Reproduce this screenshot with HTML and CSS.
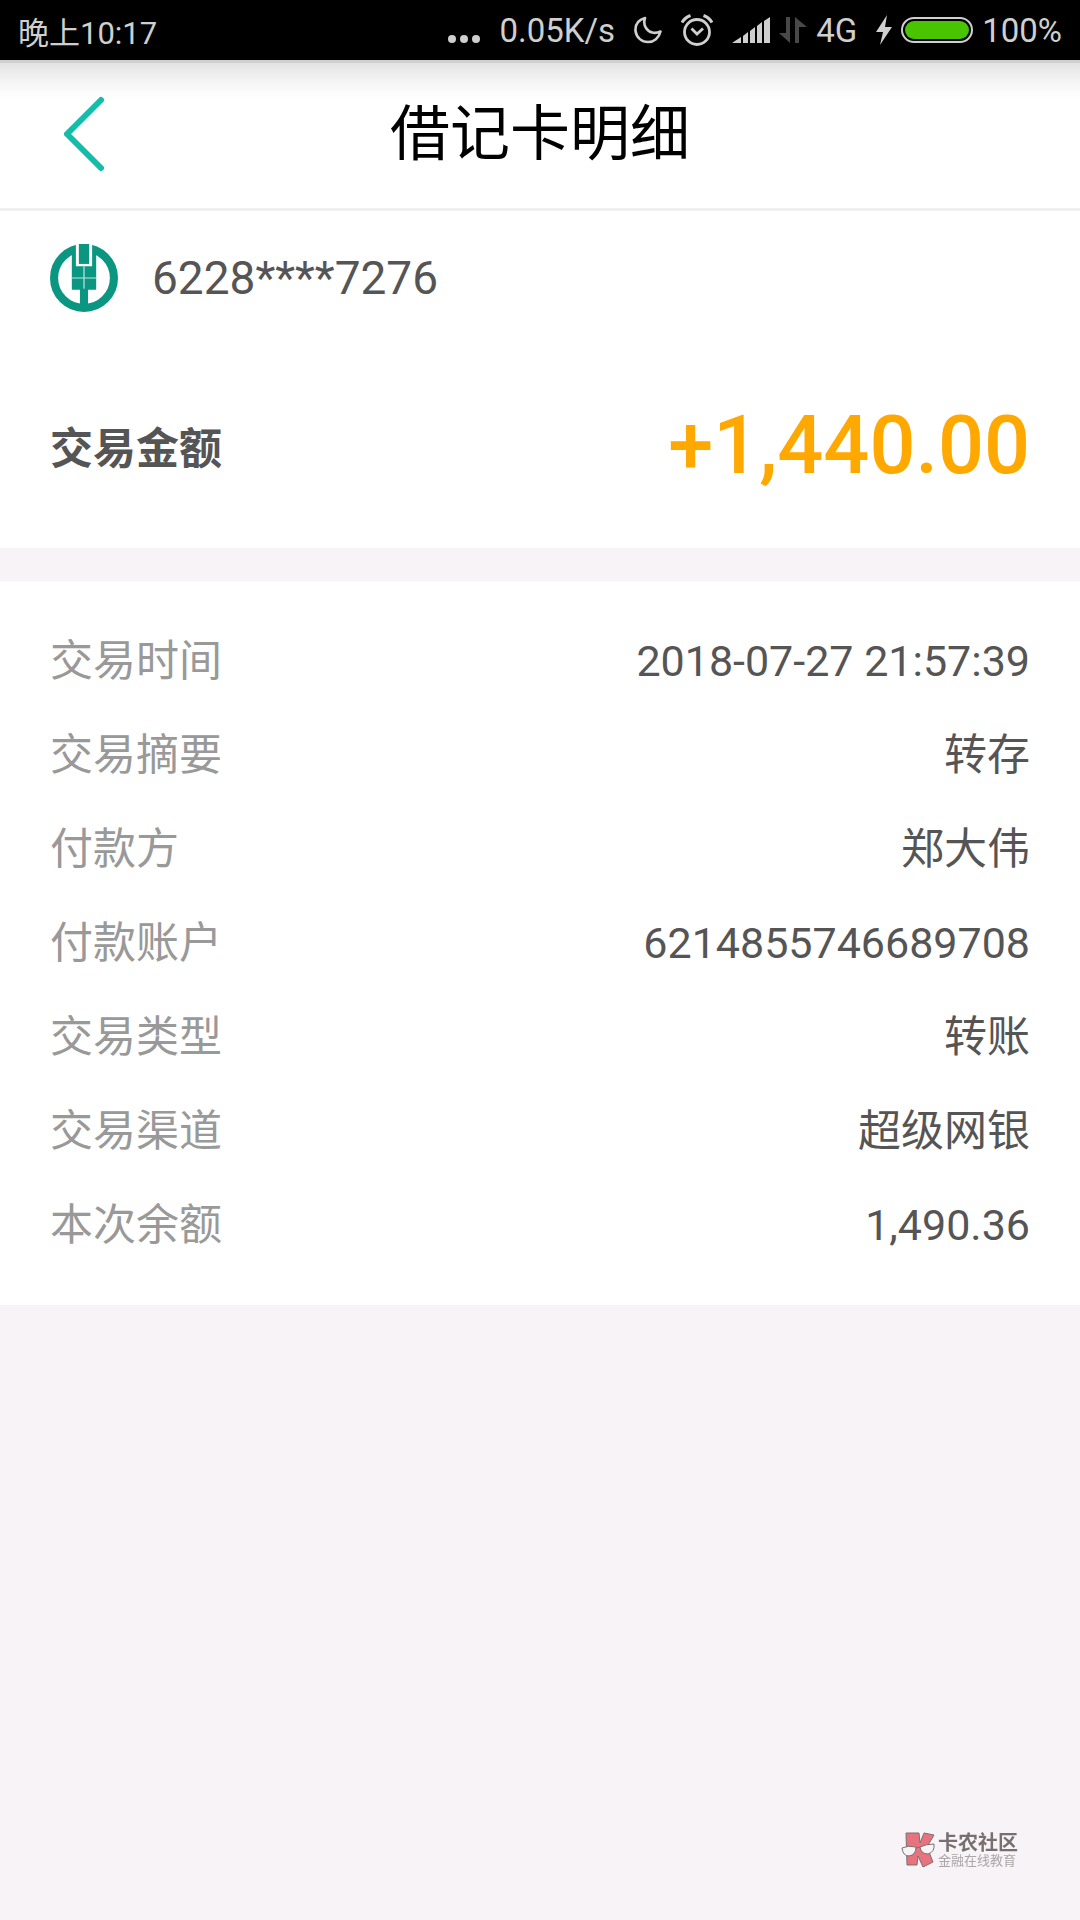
FILE: index.html
```html
<!DOCTYPE html>
<html lang="zh-CN">
  <head>
    <meta charset="UTF-8" />
    <meta name="viewport" content="width=device-width, initial-scale=1.0" />
    <title>借记卡明细</title>
    <link rel="stylesheet" href="styles.css" />
  </head>
  <body>
    <div class="status-bar">
      <span class="status-time">晚上10:17</span>
      <div class="status-icons">
        <svg width="32" height="30" viewBox="0 0 32 30" fill="#cfcfcf">
          <circle cx="4" cy="24" r="4" />
          <circle cx="16" cy="24" r="4" />
          <circle cx="28" cy="24" r="4" />
        </svg>
        <span>0.05K/s</span>
        <!-- moon -->
        <svg width="28" height="28" viewBox="0 0 28 28">
          <path d="M11 2 C4 4 1 9 1.500 15 C2.500 22 8 26 14 26 C20 26 25 22 26.500 15.500 C21 18 15 17 12 12 C10 9 10 5 11 2 Z" fill="none" stroke="#cfcfcf" stroke-width="2.6" stroke-linejoin="round" />
        </svg>
        <!-- alarm -->
        <svg width="32" height="32" viewBox="0 0 32 32" fill="none" stroke="#cfcfcf">
          <circle cx="16" cy="18" r="12.5" stroke-width="2.8" />
          <path d="M10.5 14.5 L16 20 L22 14.5" stroke-width="2.8" />
          <path d="M1 8.5 Q4 3.5 9.5 1.5 M31 8.5 Q28 3.5 22.5 1.5" stroke-width="3" />
        </svg>
        <div class="status-group">
          <svg width="38" height="28" viewBox="0 0 38 28" fill="#cfcfcf">
            <path d="M0 27 L9 21 V27 Z M11 20 L16 16 V27 H11 Z M18 15 L23 11 V27 H18 Z M25 10 L30 6 V27 H25 Z M32 5 L38 1 V27 H32 Z" />
          </svg>
          <svg width="28" height="28" viewBox="0 0 28 28" fill="#484848">
            <path d="M7 1 H11 V27 L0 17 H7 Z" />
            <path d="M16 27 V1 L28 11 H20 V27 Z" />
          </svg>
          <span>4G</span>
        </div>
        <div class="status-group">
          <svg width="16" height="30" viewBox="0 0 16 30" fill="#cfcfcf">
            <path d="M11 0 L0 17 H7 L4 30 L16 12 H9 Z" />
          </svg>
          <div class="battery"></div>
          <span>100%</span>
        </div>
      </div>
    </div>

    <header class="header">
      <button class="back-btn" aria-label="返回">
        <svg width="40" height="76" viewBox="0 0 40 76">
          <path d="M37 4 L3 38 L37 72" fill="none" stroke="#13bda9" stroke-width="6" stroke-linecap="round" stroke-linejoin="round" />
        </svg>
      </button>
      <h1 class="title">借记卡明细</h1>
    </header>

    <main>
      <section class="card">
        <div class="account">
          <svg width="68" height="68" viewBox="0 0 67 67">
            <circle cx="33.5" cy="33.5" r="29.5" fill="none" stroke="#0b9681" stroke-width="8" />
            <path d="M21.5 3 H45.5 V45 H37.5 V62 H29.5 V45 H21.5 Z" fill="#0b9681" />
            <path d="M25.5 0 H28.5 V19.5 H38.5 V0 H41.5 V22 H25.5 Z" fill="#fff" />
            <path d="M28.5 0 H38.5 V19.5 H28.5 Z" fill="#0b9681" />
            <path d="M33.5 22 V44 M21 33.5 H46" stroke="#bfe5df" stroke-width="1.2" />
          </svg>
          <span class="account-number">6228****7276</span>
        </div>
        <div class="amount-row">
          <span class="amount-label">交易金额</span>
          <span class="amount">+1,440.00</span>
        </div>
      </section>

      <dl class="details">
        <div class="detail-row">
          <dt>交易时间</dt>
          <dd>2018-07-27 21:57:39</dd>
        </div>
        <div class="detail-row">
          <dt>交易摘要</dt>
          <dd>转存</dd>
        </div>
        <div class="detail-row">
          <dt>付款方</dt>
          <dd>郑大伟</dd>
        </div>
        <div class="detail-row">
          <dt>付款账户</dt>
          <dd>6214855746689708</dd>
        </div>
        <div class="detail-row">
          <dt>交易类型</dt>
          <dd>转账</dd>
        </div>
        <div class="detail-row">
          <dt>交易渠道</dt>
          <dd>超级网银</dd>
        </div>
        <div class="detail-row">
          <dt>本次余额</dt>
          <dd>1,490.36</dd>
        </div>
      </dl>
    </main>

    <div class="watermark">
      <svg width="35" height="36" viewBox="0 0 35 36">
        <path d="M5 1 L18 1 L19 11 L23 1 L33 3 L26 15 L32 30 L22 35 L17 24 L16 33 L6 33 Z" fill="#e8737f" stroke="#77706f" stroke-width="1" />
        <path d="M1 16 Q7 13 15 15 Q15 23 8 24 Q2 24 1 16 Z" fill="#f7f3f7" stroke="#77706f" stroke-width="1" />
        <path d="M19 15 Q25 12 33 12 Q34 20 27 22 Q20 22 19 15 Z" fill="#f7f3f7" stroke="#77706f" stroke-width="1" />
        <path d="M15 16 L19 15" fill="none" stroke="#77706f" stroke-width="1" />
      </svg>
      <div class="watermark-text">
        <span class="watermark-name">卡农社区</span>
        <span class="watermark-slogan">金融在线教育</span>
      </div>
    </div>
  </body>
</html>
```
FILE: styles.css
```css
* {
  box-sizing: border-box;
}
body {
  margin: 0;
  min-height: 100vh;
  background-color: #f7f3f7;
  color: #555;
  font-family: Roboto, "Noto Sans CJK SC", sans-serif;
}

/* phone status bar */
.status-bar {
  display: flex;
  justify-content: space-between;
  align-items: center;
  height: 60px;
  padding: 0 18px;
  background-color: #000;
  color: #cfcfcf;
  font-size: 33px;
}
.status-time {
  font-size: 31px;
}
.status-icons {
  display: flex;
  align-items: center;
  gap: 19px;
}
.status-group {
  display: flex;
  align-items: center;
  gap: 9px;
}
.battery {
  width: 72px;
  height: 26px;
  border: 2px solid #cfcfcf;
  border-radius: 13px;
  padding: 2px;
  background-color: #48c400;
  background-clip: content-box;
}

/* header */
.header {
  display: grid;
  grid-template-columns: 120px 1fr 120px;
  align-items: center;
  height: 151px;
  border-bottom: 3px solid #f0f0f0;
  background: linear-gradient(#d0d0d0 3px, #e2e2e2 3px, #f3f3f3 20px, #fff 38px);
}
.back-btn {
  display: flex;
  padding: 0 0 0 64px;
  border: none;
  background: none;
  cursor: pointer;
}
.title {
  margin: 0;
  padding-top: 2px;
  color: #000;
  font-size: 60px;
  font-weight: 400;
  line-height: 88px;
  text-align: center;
}

/* account and amount */
.card {
  padding: 33px 50px 32px;
  background-color: #fff;
}
.account {
  display: flex;
  align-items: center;
  gap: 34px;
  height: 68px;
}
.account-number {
  font-size: 46px;
}
.amount-row {
  display: flex;
  justify-content: space-between;
  align-items: center;
  height: 142px;
  margin-top: 62px;
}
.amount-label {
  font-size: 43px;
  font-weight: 700;
}
.amount {
  color: #ffa800;
  font-size: 81px;
  font-weight: 500;
}

/* details list */
.details {
  margin: 33px 0 0;
  padding: 33px 50px;
  background-color: #fff;
}
.detail-row {
  display: flex;
  justify-content: space-between;
  font-size: 43px;
  line-height: 94px;
}
.detail-row dt {
  color: #999;
}
.detail-row dd {
  margin: 0;
}

/* watermark in the corner */
.watermark {
  position: fixed;
  right: 62px;
  bottom: 52px;
  display: flex;
  align-items: center;
  gap: 2px;
}
.watermark-text {
  display: flex;
  flex-direction: column;
}
.watermark-name {
  color: #77706f;
  font-size: 20px;
  font-weight: 700;
  line-height: 22px;
}
.watermark-slogan {
  color: #aaa5a8;
  font-size: 13px;
  line-height: 14px;
}
```
